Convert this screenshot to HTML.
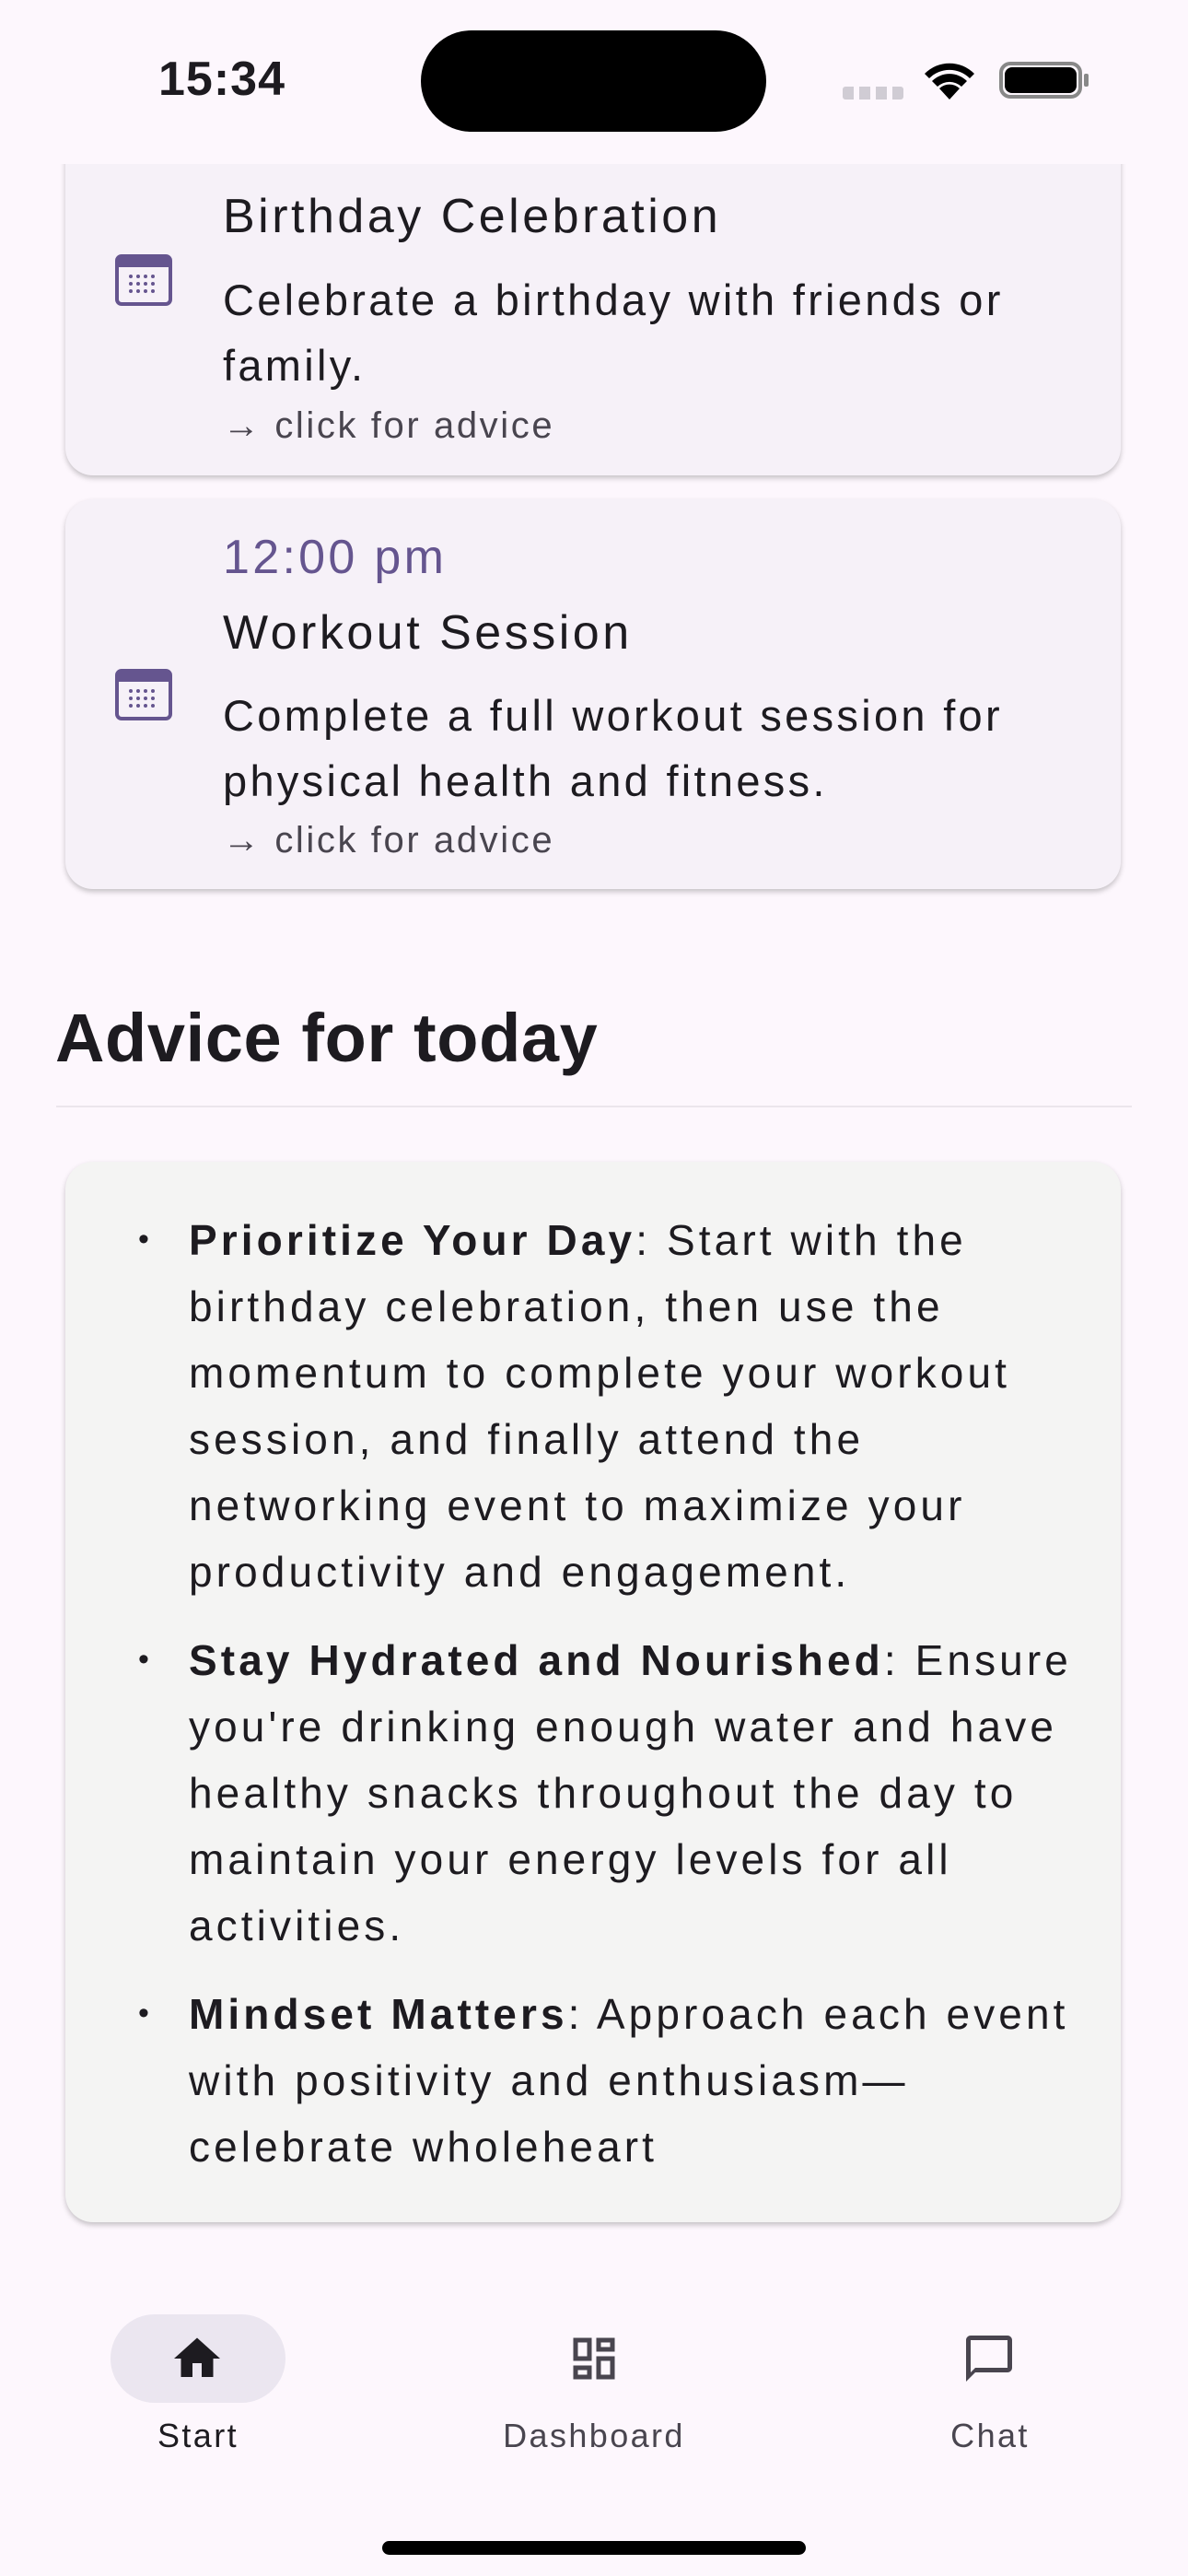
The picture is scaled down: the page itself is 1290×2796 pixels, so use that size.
<!DOCTYPE html>
<html><head><meta charset="utf-8"><style>
*{margin:0;padding:0;box-sizing:border-box}
body{width:1290px;height:2796px;background:#fdf7fd;font-family:"Liberation Sans",sans-serif;position:relative;overflow:hidden;color:#1d1b20}
.abs{position:absolute;white-space:nowrap}
.card{position:absolute;left:71px;width:1146px;background:#f6f1f8;border-radius:30px;box-shadow:0 3px 6px rgba(0,0,0,.22)}
.t{font-size:52px;letter-spacing:3.5px}
.d{font-size:47px;letter-spacing:3.3px;color:#1d1b20}
.c{font-size:40px;letter-spacing:2.6px;color:#49454f}
.a{font-size:46px;letter-spacing:4.1px;left:205px}
.b{font-size:34px;left:150px;margin-top:6px}
.nl{font-size:36px;letter-spacing:2.4px;color:#49454f;transform:translateX(-50%)}
</style></head><body>
<div class="card" style="top:120px;height:396px;border-radius:0 0 30px 30px"></div>
<div class="card" style="top:542px;height:423px"></div>
<div class="abs" style="left:0;top:0;width:1290px;height:178px;background:#fdf7fd"></div>
<div class="abs" style="left:172px;top:56px;font-size:52px;font-weight:bold;letter-spacing:1px">15:34</div>
<div class="abs" style="left:457px;top:33px;width:375px;height:110px;border-radius:55px;background:#000"></div>
<div class="abs" style="left:915px;top:94px;width:66px;height:14px;background:repeating-linear-gradient(90deg,#d0ccd4 0 12px,transparent 12px 18px);border-radius:3px"></div>
<svg class="abs" style="left:1000px;top:64px" width="62" height="46" viewBox="0 0 62 46"><path d="M31 44 L20 32 A16 16 0 0 1 42 32Z M12 24 A27 27 0 0 1 50 24 L44 30 A19 19 0 0 0 18 30Z M4 16 A38 38 0 0 1 58 16 L53 21 A31 31 0 0 0 9 21Z" fill="#000"/></svg>
<div class="abs" style="left:1085px;top:67px;width:90px;height:40px;border:4px solid #888;border-radius:12px"></div>
<div class="abs" style="left:1091px;top:73px;width:78px;height:28px;background:#000;border-radius:8px"></div>
<div class="abs" style="left:1177px;top:80px;width:5px;height:14px;background:#888;border-radius:2px"></div>

<svg class="abs" style="left:125px;top:276px" width="62" height="56" viewBox="0 0 62 56"><rect x="2" y="2" width="58" height="52" rx="5" fill="none" stroke="#65558f" stroke-width="4"/><rect x="2" y="2" width="58" height="12" fill="#65558f"/><g fill="#65558f"><circle cx="17" cy="24" r="2"/><circle cx="25" cy="24" r="2"/><circle cx="33" cy="24" r="2"/><circle cx="41" cy="24" r="2"/><circle cx="17" cy="32" r="2"/><circle cx="25" cy="32" r="2"/><circle cx="33" cy="32" r="2"/><circle cx="41" cy="32" r="2"/><circle cx="17" cy="40" r="2"/><circle cx="25" cy="40" r="2"/><circle cx="33" cy="40" r="2"/><circle cx="41" cy="40" r="2"/></g></svg>
<div class="abs t" style="left:242px;top:205px">Birthday Celebration</div>
<div class="abs d" style="left:242px;top:298px">Celebrate a birthday with friends or</div>
<div class="abs d" style="left:242px;top:369px">family.</div>
<div class="abs c" style="left:242px;top:440px">→ click for advice</div>

<svg class="abs" style="left:125px;top:726px" width="62" height="56" viewBox="0 0 62 56"><rect x="2" y="2" width="58" height="52" rx="5" fill="none" stroke="#65558f" stroke-width="4"/><rect x="2" y="2" width="58" height="12" fill="#65558f"/><g fill="#65558f"><circle cx="17" cy="24" r="2"/><circle cx="25" cy="24" r="2"/><circle cx="33" cy="24" r="2"/><circle cx="41" cy="24" r="2"/><circle cx="17" cy="32" r="2"/><circle cx="25" cy="32" r="2"/><circle cx="33" cy="32" r="2"/><circle cx="41" cy="32" r="2"/><circle cx="17" cy="40" r="2"/><circle cx="25" cy="40" r="2"/><circle cx="33" cy="40" r="2"/><circle cx="41" cy="40" r="2"/></g></svg>
<div class="abs" style="left:242px;top:575px;font-size:52px;letter-spacing:3.3px;color:#65558f">12:00 pm</div>
<div class="abs t" style="left:242px;top:657px">Workout Session</div>
<div class="abs d" style="left:242px;top:749px">Complete a full workout session for</div>
<div class="abs d" style="left:242px;top:820px">physical health and fitness.</div>
<div class="abs c" style="left:242px;top:890px">→ click for advice</div>

<div class="abs" style="left:60px;top:1084px;font-size:74px;font-weight:bold;letter-spacing:0.6px">Advice for today</div>
<div class="abs" style="left:61px;top:1200px;width:1168px;height:2px;background:#ebe5ec"></div>

<div class="card" style="top:1261px;height:1151px;background:#f4f4f3"></div>
<div class="abs b" style="top:1320px">•</div>
<div class="abs a" style="top:1319px"><b>Prioritize Your Day</b>: Start with the</div>
<div class="abs a" style="top:1391px">birthday celebration, then use the</div>
<div class="abs a" style="top:1463px">momentum to complete your workout</div>
<div class="abs a" style="top:1535px">session, and finally attend the</div>
<div class="abs a" style="top:1607px">networking event to maximize your</div>
<div class="abs a" style="top:1679px">productivity and engagement.</div>
<div class="abs b" style="top:1776px">•</div>
<div class="abs a" style="top:1775px"><b>Stay Hydrated and Nourished</b>: Ensure</div>
<div class="abs a" style="top:1847px">you're drinking enough water and have</div>
<div class="abs a" style="top:1919px">healthy snacks throughout the day to</div>
<div class="abs a" style="top:1991px">maintain your energy levels for all</div>
<div class="abs a" style="top:2063px">activities.</div>
<div class="abs b" style="top:2160px">•</div>
<div class="abs a" style="top:2159px"><b>Mindset Matters</b>: Approach each event</div>
<div class="abs a" style="top:2231px">with positivity and enthusiasm—</div>
<div class="abs a" style="top:2303px">celebrate wholeheart</div>

<div class="abs" style="left:120px;top:2512px;width:190px;height:96px;border-radius:48px;background:#ebe6f0"></div>
<svg class="abs" style="left:184px;top:2530px" width="60" height="60" viewBox="0 0 24 24"><path d="M10 20v-6h4v6h5v-8h3L12 3 2 12h3v8z" fill="#1d1b20"/></svg>
<svg class="abs" style="left:615px;top:2530px" width="60" height="60" viewBox="0 0 24 24"><path d="M19 5v2h-4V5h4M9 5v6H5V5h4m10 8v6h-4v-6h4M9 17v2H5v-2h4M21 3h-8v6h8V3zM11 3H3v10h8V3zm10 8h-8v10h8V11zm-10 4H3v6h8v-6z" fill="#49454f"/></svg>
<svg class="abs" style="left:1044px;top:2530px" width="60" height="60" viewBox="0 0 24 24"><path d="M20 2H4c-1.1 0-2 .9-2 2v18l4-4h14c1.1 0 2-.9 2-2V4c0-1.1-.9-2-2-2zm0 14H6l-2 2V4h16v12z" fill="#49454f"/></svg>
<div class="abs nl" style="left:215px;top:2623px;color:#1d1b20">Start</div>
<div class="abs nl" style="left:645px;top:2623px">Dashboard</div>
<div class="abs nl" style="left:1075px;top:2623px">Chat</div>
<div class="abs" style="left:415px;top:2758px;width:460px;height:15px;border-radius:8px;background:#000"></div>
</body></html>
